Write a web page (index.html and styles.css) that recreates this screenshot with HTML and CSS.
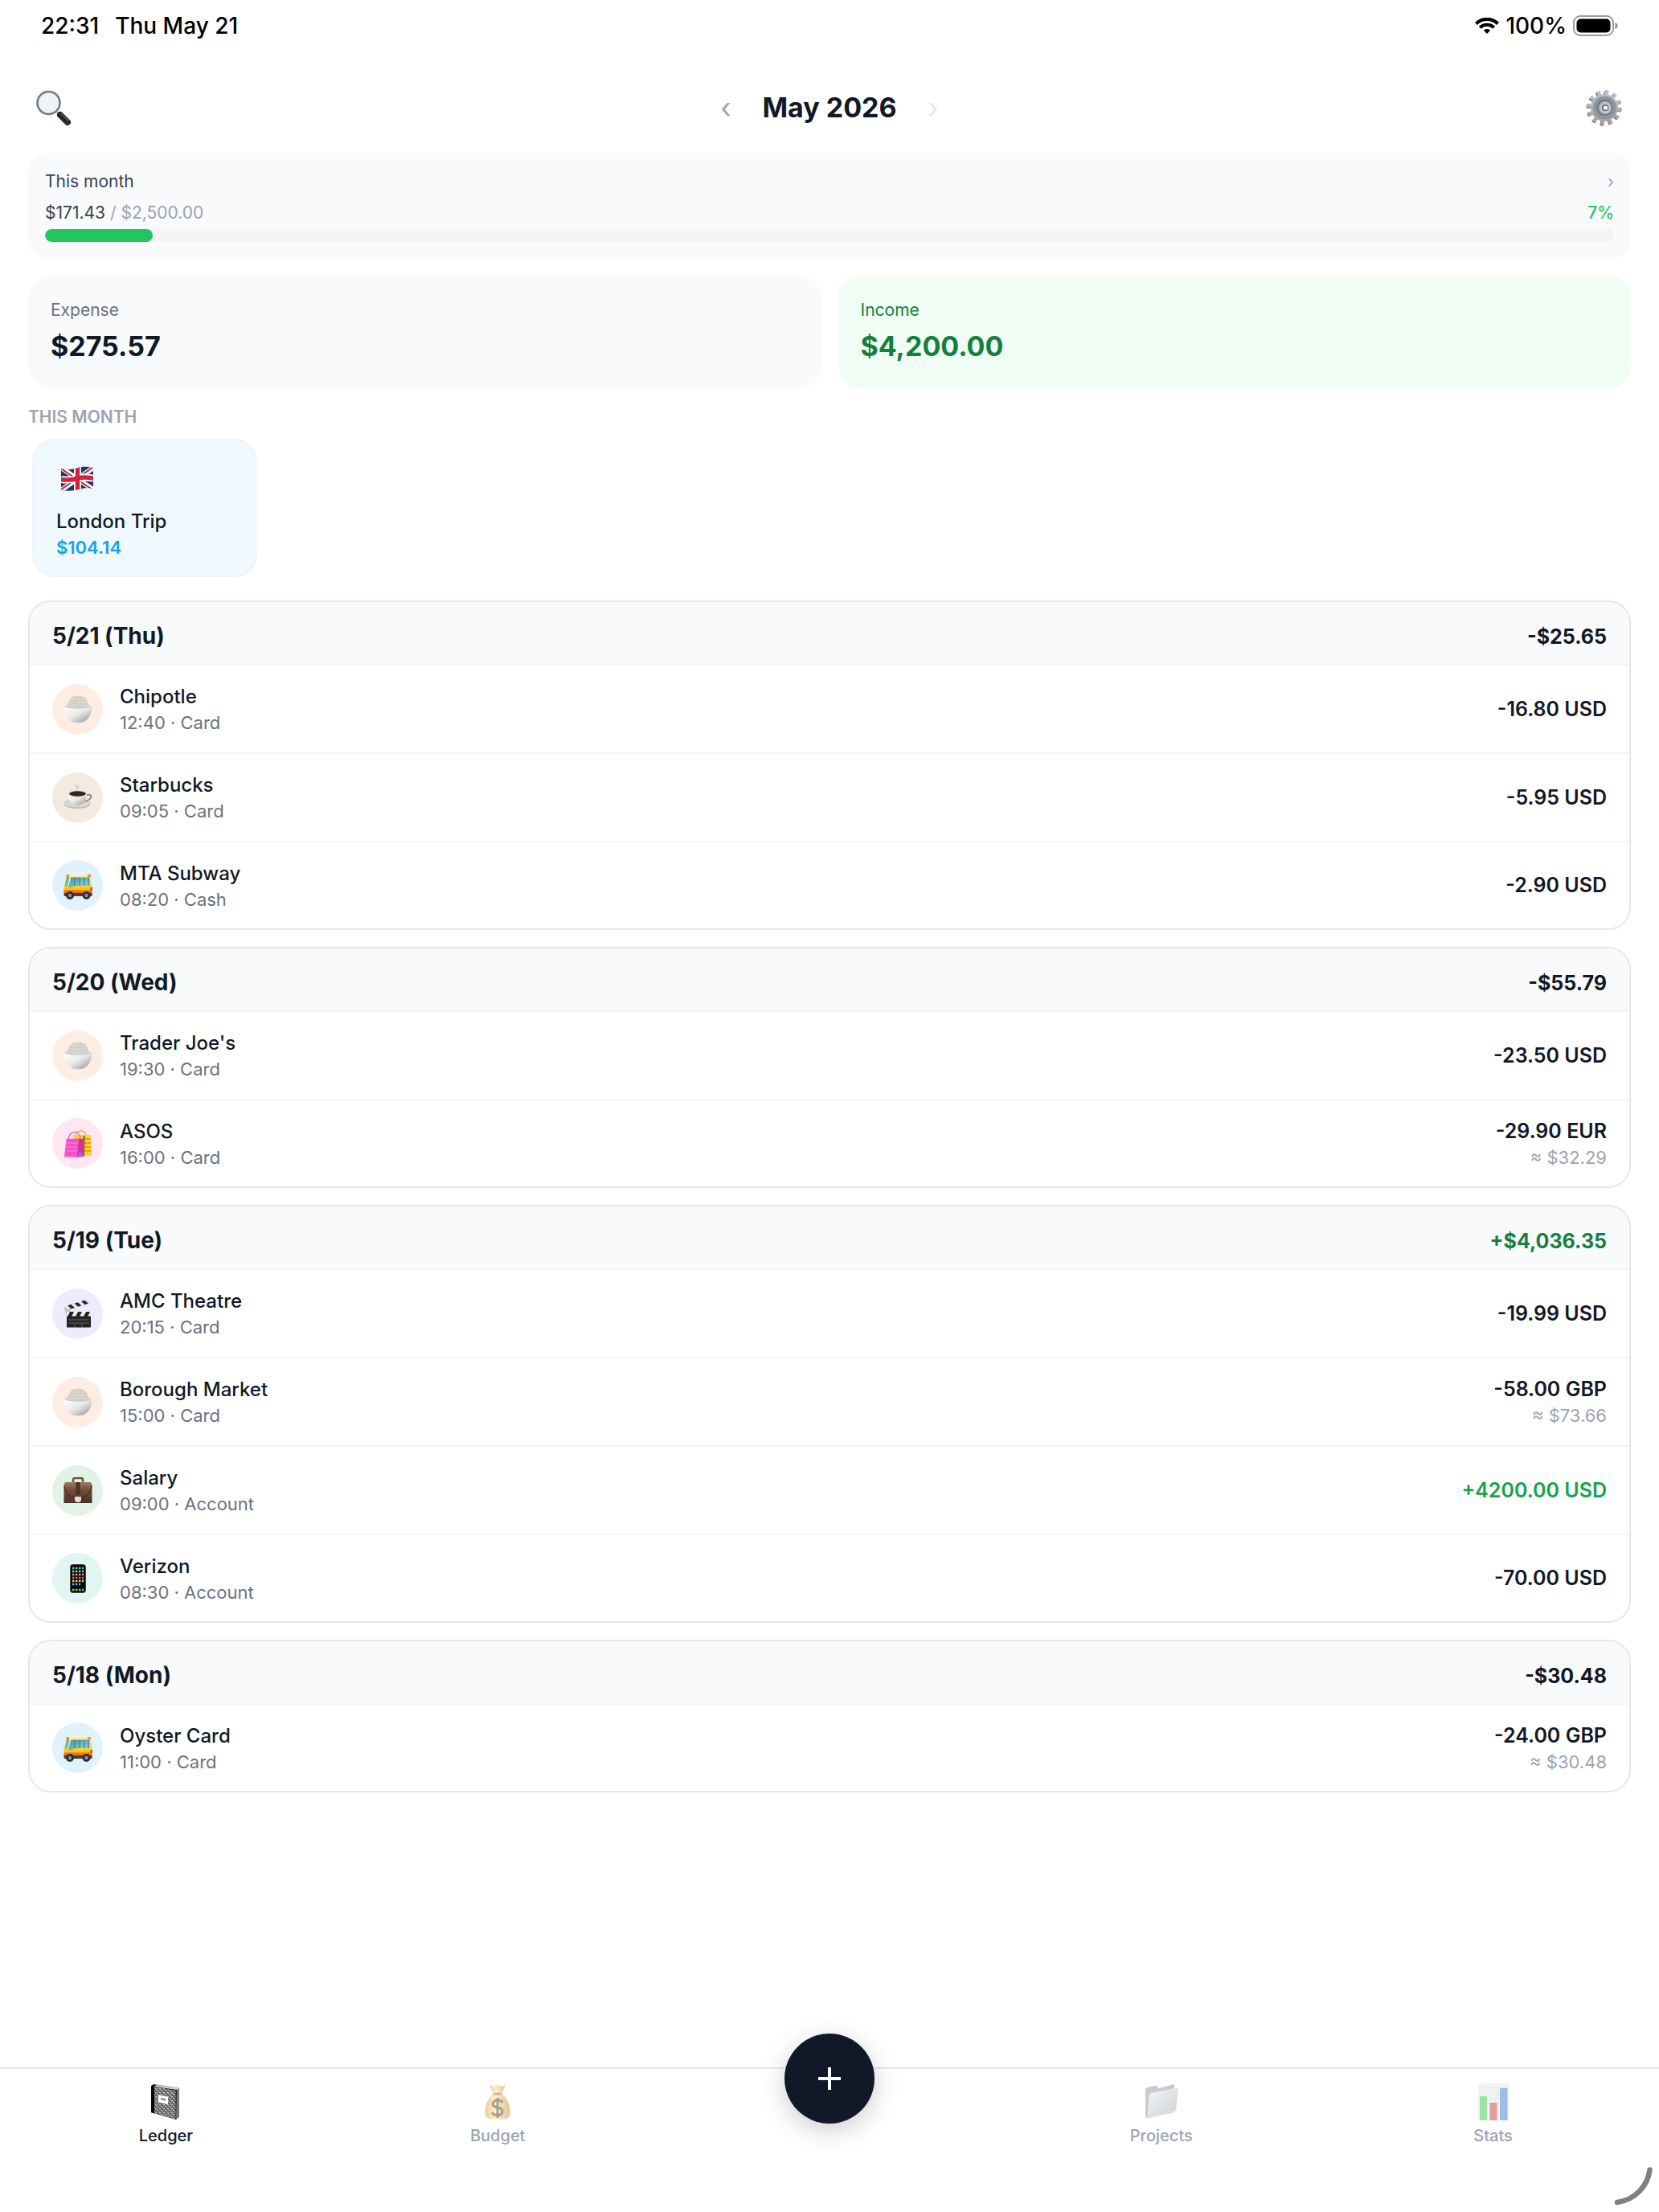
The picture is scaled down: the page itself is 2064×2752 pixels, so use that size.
FILE: index.html
```html
<!DOCTYPE html>
<html lang="en">
<head>
  <meta charset="UTF-8" />
  <meta name="viewport" content="width=device-width, initial-scale=1.0" />
  <title>Ledger - May 2026</title>
  <link rel="stylesheet" href="styles.css">
</head>
<body>
  <!-- Shared icons -->
  <svg class="defs" aria-hidden="true">
    <defs>
      <linearGradient id="bowl-fill" x1="0" y1="0" x2="1" y2="1">
        <stop offset="0" stop-color="#ffffff" />
        <stop offset="0.5" stop-color="#e8e8e6" />
        <stop offset="1" stop-color="#8d8d8b" />
      </linearGradient>
      <linearGradient id="bus-fill" x1="0" y1="0" x2="0" y2="1">
        <stop offset="0" stop-color="#fdeeb4" />
        <stop offset="0.5" stop-color="#fbe27a" />
        <stop offset="0.6" stop-color="#fbd11c" />
        <stop offset="0.74" stop-color="#fbc400" />
        <stop offset="0.8" stop-color="#f5791f" />
        <stop offset="1" stop-color="#e8541a" />
      </linearGradient>
      <linearGradient id="glass-fill" x1="0" y1="0" x2="1" y2="1">
        <stop offset="0" stop-color="#3f939f" />
        <stop offset="1" stop-color="#9adbe6" />
      </linearGradient>
      <linearGradient id="case-fill" x1="0" y1="0" x2="0" y2="1">
        <stop offset="0" stop-color="#a67c62" />
        <stop offset="0.35" stop-color="#73503d" />
        <stop offset="1" stop-color="#4b3023" />
      </linearGradient>
      <linearGradient id="gear-fill" x1="0" y1="0" x2="0" y2="1">
        <stop offset="0" stop-color="#b4c1cc" />
        <stop offset="1" stop-color="#a79fa6" />
      </linearGradient>
      <linearGradient id="bag-fill" x1="0" y1="0" x2="1" y2="0">
        <stop offset="0" stop-color="#d79a3c" />
        <stop offset="0.4" stop-color="#ffe28a" />
        <stop offset="1" stop-color="#c98a30" />
      </linearGradient>
      <linearGradient id="folder-fill" x1="0" y1="0" x2="1" y2="1">
        <stop offset="0" stop-color="#e6ebef" />
        <stop offset="1" stop-color="#9ea4aa" />
      </linearGradient>
      <pattern id="speckle" width="5" height="5" patternUnits="userSpaceOnUse">
        <rect width="5" height="5" fill="#444" />
        <path d="M0 1h2v1.400H0zM3 0h1.400v1.400H3zM2 2.600h1.600v1.400H2zM4 3.400h1v1.300H4zM0.500 3.800h1.200v1.200H0.500z" fill="#d6d6d6" />
      </pattern>
      <pattern id="grains" width="4" height="4" patternUnits="userSpaceOnUse">
        <rect width="4" height="4" fill="#d3d0ca" />
        <path d="M0 0.500H1.500V1.500H0zM2.200 2.300H3.800V3.300H2.200z" fill="#efece7" />
        <path d="M2.500 0.300H3.300V1.100H2.500zM0.500 2.600H1.300V3.400H0.500z" fill="#b9b5ae" />
      </pattern>
      <clipPath id="flag-wave">
        <path d="M6 7C15 9 20 8 27 6S40 5 46 6V32C40 30 34 31 27 33S13 35 6 34Z" />
      </clipPath>
    </defs>
    <symbol id="icon-rice" viewBox="0 0 36 36">
      <path d="M2.500 16C2.500 13 5 12.500 6 9.500C8 4 12 1.500 18.500 1.500S28.500 4.500 30 9.500C31 12.500 33 13 33 16C26 18.500 9 18.500 2.500 16Z" fill="url(#grains)" />
      <path d="M0.500 14.500C7 18 29 18 35.500 14.500C35.500 25 31 31 24.500 34.500Q18 36 11.500 34.500C5 31 0.500 25 0.500 14.500Z" fill="url(#bowl-fill)" />
      <path d="M0.500 14.500C7 18 29 18 35.500 14.500" fill="none" stroke="#c4c2be" stroke-width="0.800" />
    </symbol>
    <symbol id="icon-bus" viewBox="0 0 36 36">
      <path d="M8 4.500Q8.500 2 11 2H25Q27.500 2 28 4.500Z" fill="#fff3cb" />
      <path d="M4 4H32Q34.800 4 34.900 7L35.500 20V29H0.500V20L2.500 6.500Q3 4 4 4Z" fill="url(#bus-fill)" />
      <path d="M4 7H7.500Q6.500 12 5.500 18.500H1.500Z" fill="url(#glass-fill)" />
      <path d="M9.500 7.500H32.500L33.500 18H13L12 20H6Z" fill="url(#glass-fill)" />
      <path d="M14 7.500V18.500M20 7.500V18M26 7.500V18M31 7.500V18" stroke="#2f6f7b" stroke-width="0.900" />
      <path d="M3.500 4.300H7V7H3.500ZM30 4.300H34V7H30Z" fill="#ef8a24" />
      <path d="M33.500 20H35.800V24H33.500Z" fill="#d8372a" />
      <path d="M0.500 27H35.500V31H1Z" fill="#45403d" />
      <circle cx="8" cy="30" r="5" fill="#2e2d2d" />
      <circle cx="8" cy="30" r="2.200" fill="#8f9092" />
      <circle cx="28.500" cy="30" r="5" fill="#2e2d2d" />
      <circle cx="28.500" cy="30" r="2.200" fill="#8f9092" />
    </symbol>
  </svg>

  <div class="status-bar">
    <div class="status-left">
      <span>22:31</span>
      <span>Thu May 21</span>
    </div>
    <div class="status-right">
      <svg class="wifi" viewBox="0 0 30 20" aria-hidden="true">
        <path d="M1.500 7.500A19 19 0 0 1 28.500 7.500" fill="none" stroke="#000" stroke-width="4.200" />
        <path d="M6.300 12.200A12.500 12.500 0 0 1 23.700 12.200" fill="none" stroke="#000" stroke-width="4" />
        <path d="M15 20 10.800 15.800A6 6 0 0 1 19.200 15.800Z" fill="#000" />
      </svg>
      <span>100%</span>
      <svg class="battery" viewBox="0 0 56 28" aria-hidden="true">
        <rect x="1" y="2" width="49" height="24" rx="8" fill="none" stroke="#9b9b9b" stroke-width="2" />
        <rect x="4.500" y="5.500" width="42" height="17" rx="5" fill="#000" />
        <path d="M52.500 10Q55.500 11 55.500 14T52.500 18Z" fill="#8a8a8a" />
      </svg>
    </div>
  </div>

  <header class="month-header">
    <button class="icon-btn" aria-label="Search">
      <svg viewBox="1 -1 46 46" aria-hidden="true">
        <path d="M27.500 27.500 32 32" stroke="#8b8b8b" stroke-width="3" />
        <path d="M31 31 40 40" stroke="#23272b" stroke-width="8" stroke-linecap="round" />
        <path d="M32.500 29.500 41 38" stroke="#5b6168" stroke-width="1.500" stroke-linecap="round" />
        <circle cx="16.500" cy="16" r="14" fill="#f2f3f4" stroke="#6d7881" stroke-width="2.500" />
        <circle cx="16.500" cy="16" r="12.300" fill="none" stroke="#d7e3ec" />
      </svg>
    </button>
    <div class="month-picker">
      <button class="arrow" aria-label="Previous month">‹</button>
      <h1>May 2026</h1>
      <button class="arrow next" aria-label="Next month" disabled>›</button>
    </div>
    <button class="icon-btn" aria-label="Settings">
      <svg viewBox="0 0 46 46" aria-hidden="true">
        <circle cx="22" cy="24" r="18.500" fill="none" stroke="#5f5b5d" stroke-width="6" stroke-dasharray="4 5.690" />
        <circle cx="23" cy="23" r="19" fill="none" stroke="url(#gear-fill)" stroke-width="6" stroke-dasharray="4.500 5.450" />
        <circle cx="23" cy="23" r="17" fill="url(#gear-fill)" />
        <circle cx="23.500" cy="23" r="14" fill="#858d93" />
        <circle cx="23.500" cy="23" r="11.500" fill="#777e83" stroke="#9aa2a8" stroke-width="1.500" />
        <circle cx="24" cy="23" r="7.800" fill="#bcc3c8" />
        <circle cx="24" cy="23" r="4" fill="#5f6468" />
        <circle cx="24.500" cy="23" r="2.600" fill="#fff" />
      </svg>
    </button>
  </header>

  <main class="content">
    <section class="budget">
      <div class="budget-row">
        <span class="budget-title">This month</span>
        <span class="budget-more">›</span>
      </div>
      <div class="budget-row budget-numbers">
        <span class="muted"><span class="spent">$171.43</span> / $2,500.00</span>
        <span class="percent">7%</span>
      </div>
      <div class="track"><div class="fill" style="width: 6.860%"></div></div>
    </section>

    <section class="summary">
      <div class="summary-card">
        <p>Expense</p>
        <strong>$275.57</strong>
      </div>
      <div class="summary-card income">
        <p>Income</p>
        <strong>$4,200.00</strong>
      </div>
    </section>

    <section class="trips">
      <h2>THIS MONTH</h2>
      <button class="trip">
        <svg viewBox="0 0 50 40" aria-hidden="true">
          <g clip-path="url(#flag-wave)">
            <rect width="50" height="40" fill="#22306f" />
            <path d="M6 6 46 33M46 6 6 34" stroke="#fff" stroke-width="6" />
            <path d="M6 7 46 34M46 5 6 33" stroke="#cf2138" stroke-width="2" />
            <path d="M6 20.500C15 22 20 21 27 19S40 18 46 19M26.500 2V38" fill="none" stroke="#fff" stroke-width="9" />
            <path d="M6 20.500C15 22 20 21 27 19S40 18 46 19M26.500 2V38" fill="none" stroke="#d0243c" stroke-width="5.500" />
          </g>
        </svg>
        <span class="trip-name">London Trip</span>
        <span class="trip-total">$104.14</span>
      </button>
    </section>

    <section class="day">
      <header class="day-header">
        <h3>5/21 (Thu)</h3>
        <span class="day-total">-$25.65</span>
      </header>
      <ul>
        <li class="entry">
          <span class="avatar food"><svg><use href="#icon-rice" /></svg></span>
          <div class="info">
            <span class="name">Chipotle</span>
            <span class="meta">12:40 · Card</span>
          </div>
          <div class="amount">-16.80 USD</div>
        </li>
        <li class="entry">
          <span class="avatar cafe">
            <svg viewBox="0 0 36 36">
              <path d="M13 3Q17 2 16 5T18 8M17 3Q20 5 18 7" fill="none" stroke="#cdc6bd" stroke-width="1.200" />
              <ellipse cx="17" cy="26" rx="16.500" ry="6" fill="#b9b4ab" />
              <ellipse cx="17" cy="25" rx="16.500" ry="5.500" fill="#dbd7d0" />
              <path d="M28.500 15.500C34 12.500 36.500 18 31.500 21L27 23.500" fill="none" stroke="#8d877d" stroke-width="1.800" />
              <path d="M6 14C6 23 11 27.500 17.500 27.500S29 23 29 14Z" fill="url(#bowl-fill)" />
              <ellipse cx="17.500" cy="13.500" rx="11.500" ry="4.200" fill="#e0dcd5" />
              <ellipse cx="17.500" cy="13.500" rx="10.300" ry="3.300" fill="#3d2418" />
            </svg>
          </span>
          <div class="info">
            <span class="name">Starbucks</span>
            <span class="meta">09:05 · Card</span>
          </div>
          <div class="amount">-5.95 USD</div>
        </li>
        <li class="entry">
          <span class="avatar transit"><svg><use href="#icon-bus" /></svg></span>
          <div class="info">
            <span class="name">MTA Subway</span>
            <span class="meta">08:20 · Cash</span>
          </div>
          <div class="amount">-2.90 USD</div>
        </li>
      </ul>
    </section>

    <section class="day">
      <header class="day-header">
        <h3>5/20 (Wed)</h3>
        <span class="day-total">-$55.79</span>
      </header>
      <ul>
        <li class="entry">
          <span class="avatar food"><svg><use href="#icon-rice" /></svg></span>
          <div class="info">
            <span class="name">Trader Joe's</span>
            <span class="meta">19:30 · Card</span>
          </div>
          <div class="amount">-23.50 USD</div>
        </li>
        <li class="entry">
          <span class="avatar shopping">
            <svg viewBox="0 0 36 36">
              <path d="M15 8C16 0 26 0 28 7" fill="none" stroke="#f0a73a" stroke-width="1.400" />
              <path d="M11 7H33.500L35 33H20Z" fill="#fbd42c" />
              <path d="M24 12H33.800M24.500 17H34M25 22H34.200M25 27H34.500" stroke="#f29a1f" stroke-width="2" />
              <path d="M24 9 27 7 26 33H24Z" fill="#a8701c" />
              <path d="M6 12C8 1 20 1 21 11" fill="none" stroke="#e05cc0" stroke-width="1.400" />
              <path d="M3.500 12 19 11.500 16.500 34.500 1 34Z" fill="#fb4fcb" />
              <path d="M3.500 17H18M3 22H17.500M2.500 27H17" stroke="#fd84dc" stroke-width="1" />
              <path d="M19 11.500 24 12 26 34 16.500 34.500Z" fill="#d32fa4" />
              <path d="M20.500 27 26 34 16.500 34.500Z" fill="#b05fd0" />
            </svg>
          </span>
          <div class="info">
            <span class="name">ASOS</span>
            <span class="meta">16:00 · Card</span>
          </div>
          <div class="amount">-29.90 EUR<span class="converted">≈ $32.29</span></div>
        </li>
      </ul>
    </section>

    <section class="day">
      <header class="day-header">
        <h3>5/19 (Tue)</h3>
        <span class="day-total positive">+$4,036.35</span>
      </header>
      <ul>
        <li class="entry">
          <span class="avatar movie">
            <svg viewBox="0 0 36 36">
              <path d="M0.500 9.500 32.500 0 33.500 5 3 14.500Z" fill="#ececec" />
              <path d="M5 8.200 9.500 12.500 14 11 9.500 6.800ZM13.500 5.600 18 9.800 22.500 8.400 18 4.300ZM22 3.100 26.500 7.200 31 5.800 26.500 1.800Z" fill="#2c2c2c" />
              <path d="M0.500 9.500 8 13 10 18 3 20Z" fill="#c4c4c4" />
              <path d="M4 16H35V22H4Z" fill="#f1f1f1" />
              <path d="M8 16H13L10 22H5ZM18 16H23L20 22H15ZM28 16H33L30 22H25Z" fill="#242424" />
              <rect x="4" y="21.500" width="30" height="14" rx="1" fill="#232323" />
              <path d="M6 26H32M6 30H32M14 31V35M23 31V35" stroke="#707070" stroke-width="0.900" />
            </svg>
          </span>
          <div class="info">
            <span class="name">AMC Theatre</span>
            <span class="meta">20:15 · Card</span>
          </div>
          <div class="amount">-19.99 USD</div>
        </li>
        <li class="entry">
          <span class="avatar food"><svg><use href="#icon-rice" /></svg></span>
          <div class="info">
            <span class="name">Borough Market</span>
            <span class="meta">15:00 · Card</span>
          </div>
          <div class="amount">-58.00 GBP<span class="converted">≈ $73.66</span></div>
        </li>
        <li class="entry">
          <span class="avatar salary">
            <svg viewBox="0 0 36 36">
              <path d="M12 8V5Q12 3 14 3H22Q24 3 24 5V8" fill="none" stroke="#6b5547" stroke-width="2.500" />
              <path d="M2 8H34L35.500 12V34H0.500V12Z" fill="url(#case-fill)" />
              <path d="M1 12C2 23 7 27 18 27S34 23 35 12" fill="none" stroke="#43291d" stroke-width="1.200" />
              <rect x="15.500" y="8" width="5" height="16" fill="#4c3225" />
              <path d="M14 26H22V31L20 33H16L14 31Z" fill="#d9dcde" />
            </svg>
          </span>
          <div class="info">
            <span class="name">Salary</span>
            <span class="meta">09:00 · Account</span>
          </div>
          <div class="amount received">+4200.00 USD</div>
        </li>
        <li class="entry">
          <span class="avatar phone">
            <svg viewBox="0 0 36 36">
              <rect x="8.500" y="0.500" width="19" height="35" rx="3" fill="#0b0b0b" stroke="#4a4a4a" />
              <g fill="none" stroke-width="2.400" stroke-dasharray="2.400 1.600">
                <path d="M11 5H25" stroke="#69d2a0" />
                <path d="M11 9H25" stroke="#9bc3e8" />
                <path d="M11 13H25" stroke="#e8a24e" />
                <path d="M11 17H25" stroke="#d05fc0" />
                <path d="M11 21H25" stroke="#e6d66a" />
                <path d="M11 25H21" stroke="#5ab4e0" />
                <path d="M11 32H25" stroke="#62d98a" />
              </g>
            </svg>
          </span>
          <div class="info">
            <span class="name">Verizon</span>
            <span class="meta">08:30 · Account</span>
          </div>
          <div class="amount">-70.00 USD</div>
        </li>
      </ul>
    </section>

    <section class="day">
      <header class="day-header">
        <h3>5/18 (Mon)</h3>
        <span class="day-total">-$30.48</span>
      </header>
      <ul>
        <li class="entry">
          <span class="avatar transit"><svg><use href="#icon-bus" /></svg></span>
          <div class="info">
            <span class="name">Oyster Card</span>
            <span class="meta">11:00 · Card</span>
          </div>
          <div class="amount">-24.00 GBP<span class="converted">≈ $30.48</span></div>
        </li>
      </ul>
    </section>
  </main>

  <nav class="tab-bar">
    <a class="tab active" href="#ledger">
      <svg viewBox="0 0 46 46" aria-hidden="true">
        <path d="M5 3 8 1 40 6V41L36 45 5 36Z" fill="#1d1d1d" />
        <path d="M9 4 37 8V42L40 39V6L12 2Z" fill="#cfcfcf" />
        <path d="M37 8 40 6V41L36 45Z" fill="#777" />
        <path d="M9 4 35.500 9V44.500L9 37Z" fill="url(#speckle)" />
        <path d="M5 3 9 4V37.500L5 36Z" fill="#050505" />
        <path d="M15 15.500 25 17.500V25L15 22.500Z" fill="#fff" stroke="#fff" stroke-width="2" stroke-linejoin="round" />
        <path d="M17 19 23 20.500" stroke="#777" stroke-width="2" />
      </svg>
      Ledger
    </a>
    <a class="tab" href="#budget">
      <svg viewBox="0 0 46 46" aria-hidden="true">
        <path d="M13 2 18 4 23 1 28 4 33 2 28 13H18Z" fill="url(#bag-fill)" />
        <path d="M18 13C11 17 7 28 7.500 37Q8 44 14 44.500H32Q38 44 38.500 37C39 28 35 17 28 13Z" fill="url(#bag-fill)" />
        <path d="M17.500 13H28.500" stroke="#a0702c" stroke-width="2.500" />
        <path d="M29 24Q28 21 23 21T17 25.500Q17 29 23 30T29 35Q29 39.500 23 39.500T16.500 36M23 18V43" fill="none" stroke="#4a4034" stroke-width="3" />
      </svg>
      Budget
    </a>
    <div class="tab-center">
      <button class="add-btn" aria-label="Add entry">
        <svg viewBox="0 0 28 28" aria-hidden="true"><path d="M14 0V28M0 14H28" stroke="#fff" stroke-width="4" /></svg>
      </button>
    </div>
    <a class="tab" href="#projects">
      <svg viewBox="0 0 46 46" aria-hidden="true">
        <path d="M3 7 5 5 17 2.500 19 6 39 1V36L5 43 3 41Z" fill="#8c98a2" />
        <path d="M8 15 10 12 44 6 41 34 6 43.500Z" fill="url(#folder-fill)" stroke="#d5dadd" stroke-width="0.800" />
      </svg>
      Projects
    </a>
    <a class="tab" href="#stats">
      <svg viewBox="0 0 46 46" aria-hidden="true">
        <rect x="4" y="0" width="38" height="46" fill="#e2eaf0" />
        <path d="M4 5H42M4 10H42M4 15H42M4 20H42M4 25H42M4 30H42M4 35H42M9 0V46M14 0V46M19 0V46M24 0V46M29 0V46M34 0V46" stroke="#cbd6de" stroke-width="0.700" />
        <rect x="6" y="16" width="9" height="30" fill="#3bcb4b" />
        <rect x="18.500" y="24" width="9" height="22" fill="#d13b36" />
        <rect x="31" y="6" width="9.500" height="40" fill="#3d7dce" />
      </svg>
      Stats
    </a>
  </nav>

  <svg class="corner-mark" viewBox="0 0 48 48" aria-hidden="true">
    <path d="M44.500 3.500C42 24 26 41 4 44" fill="none" stroke="#808080" stroke-width="6.500" stroke-linecap="round" />
  </svg>
</body>
</html>
```

FILE: styles.css
```css
* {
  box-sizing: border-box;
}
body {
  margin: 0;
  min-height: 100vh;
  display: flex;
  flex-direction: column;
  background-color: #fff;
  color: #111827;
  font-family: Inter, Roboto, sans-serif;
  font-size: 21px;
  line-height: 28px;
}
h1, h2, h3, p, ul {
  margin: 0;
  padding: 0;
}
ul {
  list-style: none;
}
button {
  padding: 0;
  border: none;
  background: none;
  color: inherit;
  font-family: inherit;
  cursor: pointer;
}
svg {
  display: block;
}
.defs {
  position: absolute;
  width: 0;
  height: 0;
}

/* Status bar */
.status-bar {
  display: flex;
  justify-content: space-between;
  align-items: center;
  height: 64px;
  padding: 0 51px;
  color: #000;
  font-size: 28px;
  font-weight: 500;
}
.status-left {
  display: flex;
  gap: 20px;
}
.status-right {
  display: flex;
  align-items: center;
  gap: 8px;
}
.wifi {
  width: 30px;
  height: 20px;
}
.battery {
  width: 56px;
  height: 28px;
}

/* Month header */
.month-header {
  display: flex;
  justify-content: space-between;
  align-items: center;
  height: 126px;
  padding: 14px 45px 0;
}
.icon-btn svg {
  width: 46px;
  height: 46px;
}
.month-picker {
  display: flex;
  align-items: center;
  gap: 28px;
}
.month-picker h1 {
  font-size: 34px;
  line-height: 42px;
  font-weight: 700;
}
.arrow {
  width: 35px;
  color: #9ca3af;
  font-size: 35px;
  line-height: 42px;
}
.arrow.next {
  color: #e5e7eb;
}

.content {
  flex: 1;
  display: flex;
  flex-direction: column;
  gap: 21px;
  padding: 0 35px 42px;
}

/* Budget progress */
.budget {
  padding: 22px 21px 21px;
  border-radius: 24px;
  background-color: #f9fafb;
}
.budget-row {
  display: flex;
  justify-content: space-between;
}
.budget-title,
.spent {
  color: #374151;
}
.budget-more,
.muted {
  color: #9ca3af;
}
.budget-numbers {
  margin: 11px 0 6px;
}
.percent {
  color: #22c55e;
  font-weight: 500;
}
.track {
  height: 16px;
  border-radius: 8px;
  background-color: #f3f4f6;
  overflow: hidden;
}
.fill {
  height: 100%;
  border-radius: 8px;
  background-color: #22c55e;
}

/* Expense / income */
.summary {
  display: grid;
  grid-template-columns: 1fr 1fr;
  gap: 21px;
}
.summary-card {
  padding: 29px 28px 28px;
  border-radius: 28px;
  background-color: #f9fafb;
}
.summary-card p {
  margin-bottom: 6px;
  color: #6b7280;
}
.summary-card strong {
  display: block;
  font-size: 34px;
  line-height: 49px;
  font-weight: 700;
}
.summary-card.income {
  background-color: #f0fdf4;
}
.income p,
.income strong {
  color: #15803d;
}

/* Trips */
.trips {
  margin-bottom: 8px;
}
.trips h2 {
  padding-top: 1px;
  margin-bottom: 13px;
  color: #9ca3af;
  font-size: 21px;
  font-weight: 600;
}
.trip {
  display: flex;
  flex-direction: column;
  align-items: flex-start;
  width: 280px;
  margin-left: 5px;
  padding: 21px 28px 19px;
  border: 2px solid #f3f4f6;
  border-radius: 28px;
  background-color: #f0f9ff;
}
.trip svg {
  width: 50px;
  height: 40px;
  margin: 7px 0 15px;
}
.trip-name {
  font-size: 24px;
  line-height: 35px;
  font-weight: 500;
}
.trip-total {
  color: #0ea5e9;
  font-size: 22px;
  line-height: 31px;
  font-weight: 600;
}

/* Day cards */
.day {
  border: 2px solid #e5e7eb;
  border-radius: 28px;
  overflow: hidden;
}
.day-header {
  display: flex;
  justify-content: space-between;
  align-items: baseline;
  padding: 21px 28px 14px;
  border-bottom: 2px solid #f3f4f6;
  background-color: #f9fafb;
}
.day-header h3 {
  font-size: 28px;
  line-height: 42px;
  font-weight: 700;
}
.day-total {
  font-size: 25px;
  font-weight: 700;
}
.day-total.positive {
  color: #15803d;
}
.entry {
  display: flex;
  align-items: center;
  gap: 21px;
  min-height: 110px;
  padding: 0 28px;
  border-bottom: 2px solid #f3f4f6;
}
.entry:last-child {
  min-height: 107px;
  border-bottom: none;
}
.avatar {
  display: flex;
  align-items: center;
  justify-content: center;
  width: 63px;
  height: 63px;
  border-radius: 50%;
}
.avatar svg {
  width: 36px;
  height: 36px;
}
.food {
  background-color: #ffede3;
}
.cafe {
  background-color: #f3ebe0;
}
.transit {
  background-color: #e0f2fb;
}
.shopping {
  background-color: #fde7f1;
}
.movie {
  background-color: #f0eafe;
}
.salary {
  background-color: #e1f3e6;
}
.phone {
  background-color: #e1f5f2;
}
.info {
  flex: 1;
  display: flex;
  flex-direction: column;
}
.name {
  font-size: 24px;
  line-height: 35px;
  font-weight: 500;
}
.meta {
  color: #6b7280;
  font-size: 22px;
  line-height: 31px;
}
.amount {
  font-size: 25px;
  line-height: 35px;
  font-weight: 600;
  text-align: right;
}
.amount.received {
  color: #16a34a;
}
.converted {
  display: block;
  color: #9ca3af;
  font-size: 22px;
  line-height: 31px;
  font-weight: 400;
}

/* Tab bar */
.tab-bar {
  display: grid;
  grid-template-columns: repeat(5, 1fr);
  height: 180px;
  border-top: 2px solid #e5e7eb;
}
.tab {
  display: flex;
  flex-direction: column;
  align-items: center;
  gap: 5px;
  padding-top: 18px;
  color: #9ca3af;
  font-size: 20px;
  font-weight: 500;
  text-decoration: none;
}
.tab svg {
  width: 46px;
  height: 46px;
  opacity: 0.5;
}
.tab.active {
  color: #111827;
}
.tab.active svg {
  opacity: 1;
}
.tab-center {
  display: flex;
  justify-content: center;
}
.add-btn {
  display: flex;
  align-items: center;
  justify-content: center;
  width: 112px;
  height: 112px;
  margin-top: -44px;
  border-radius: 50%;
  background-color: #111827;
  box-shadow: 0 8px 32px rgba(0, 0, 0, 0.2);
}
.add-btn svg {
  width: 28px;
  height: 28px;
}
.corner-mark {
  position: fixed;
  right: 8px;
  bottom: 8px;
  width: 48px;
  height: 48px;
}
```
